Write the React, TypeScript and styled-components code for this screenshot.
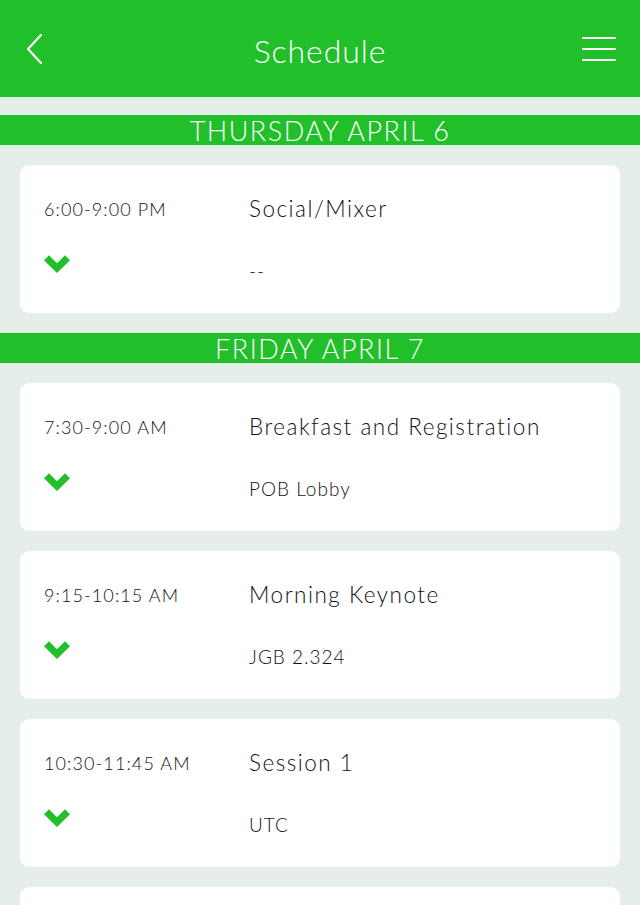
import React from "react";
import styled, { createGlobalStyle } from "styled-components";

const GREEN = "#21bf2a";

const Global = createGlobalStyle`
  html, body { margin: 0; padding: 0; }
  body { background: #e5eee9; font-family: Lato, "Noto Sans", sans-serif; }
`;

const Page = styled.div`
  width: 640px;
  height: 905px;
  background: #e5eee9;
  overflow: hidden;
`;

const Header = styled.header`
  height: 97px;
  background: ${GREEN};
  display: grid;
  grid-template-columns: 80px 1fr 80px;
  align-items: center;
`;

const Title = styled.h1`
  margin: 0;
  text-align: center;
  color: #fff;
  font-weight: 300;
  font-size: 32px;
  letter-spacing: 0.9px;
  padding-top: 3px;
`;

const IconBtn = styled.div<{ $right?: boolean }>`
  display: flex;
  justify-content: ${(p) => (p.$right ? "flex-end" : "flex-start")};
  padding: ${(p) => (p.$right ? "0 24px 0 0" : "0 0 0 24px")};
  svg { display: block; }
`;

const List = styled.div`
  padding-top: 18px;
  display: flex;
  flex-direction: column;
`;

const DayBar = styled.div`
  height: 30px;
  background: ${GREEN};
  color: #fff;
  text-align: center;
  font-weight: 300;
  font-size: 27px;
  line-height: 31px;
  letter-spacing: 1.5px;
  text-transform: uppercase;
  margin-bottom: 20px;
`;

const Card = styled.div`
  margin: 0 20px 20px;
  height: 148px;
  background: #fff;
  border-radius: 9px;
  display: grid;
  grid-template-columns: 205px 1fr;
  grid-template-rows: 62px 1fr;
  padding: 0 24px;
  box-sizing: border-box;
  color: #111;
  flex-shrink: 0;
`;

const Time = styled.div`
  font-size: 18px;
  font-weight: 300;
  align-self: end;
  margin-bottom: 7px;
  letter-spacing: 1.1px;
`;

const EventName = styled.div`
  font-size: 22.5px;
  font-weight: 300;
  align-self: end;
  margin-bottom: 5px;
  letter-spacing: 1.5px;
`;

const Chevron = styled.div`
  padding-top: 28px;
  svg { display: block; }
`;

const Place = styled.div`
  font-size: 19px;
  font-weight: 300;
  padding-top: 32px;
  letter-spacing: 1px;
`;

const ChevronIcon = () => (
  <svg width="26" height="18" viewBox="0 0 26 18">
    <path d="M0 5.2 L5 0.2 L13 8.2 L21 0.2 L26 5.2 L13 18 Z" fill={GREEN} />
  </svg>
);

type Ev = { time: string; name: string; place: string };
const days: { label: string; events: Ev[] }[] = [
  { label: "Thursday April 6", events: [{ time: "6:00-9:00 PM", name: "Social/Mixer", place: "--" }] },
  {
    label: "Friday April 7",
    events: [
      { time: "7:30-9:00 AM", name: "Breakfast and Registration", place: "POB Lobby" },
      { time: "9:15-10:15 AM", name: "Morning Keynote", place: "JGB 2.324" },
      { time: "10:30-11:45 AM", name: "Session 1", place: "UTC" },
      { time: "", name: "", place: "" },
    ],
  },
];

export default function App() {
  return (
    <Page>
      <Global />
      <Header>
        <IconBtn>
          <svg width="20" height="32" viewBox="0 0 20 32">
            <path d="M17 2 L4 16 L17 30" fill="none" stroke="#fff" strokeWidth="2.2" strokeLinecap="round" strokeLinejoin="round" />
          </svg>
        </IconBtn>
        <Title>Schedule</Title>
        <IconBtn $right>
          <svg width="34" height="26" viewBox="0 0 34 26">
            <path d="M1 2 H33 M1 13 H33 M1 24 H33" stroke="#fff" strokeWidth="2" strokeLinecap="round" />
          </svg>
        </IconBtn>
      </Header>
      <List>
        {days.map((d) => (
          <React.Fragment key={d.label}>
            <DayBar>{d.label}</DayBar>
            {d.events.map((e, i) => (
              <Card key={i}>
                <Time>{e.time}</Time>
                <EventName>{e.name}</EventName>
                <Chevron>{e.time && <ChevronIcon />}</Chevron>
                <Place>{e.place}</Place>
              </Card>
            ))}
          </React.Fragment>
        ))}
      </List>
    </Page>
  );
}
